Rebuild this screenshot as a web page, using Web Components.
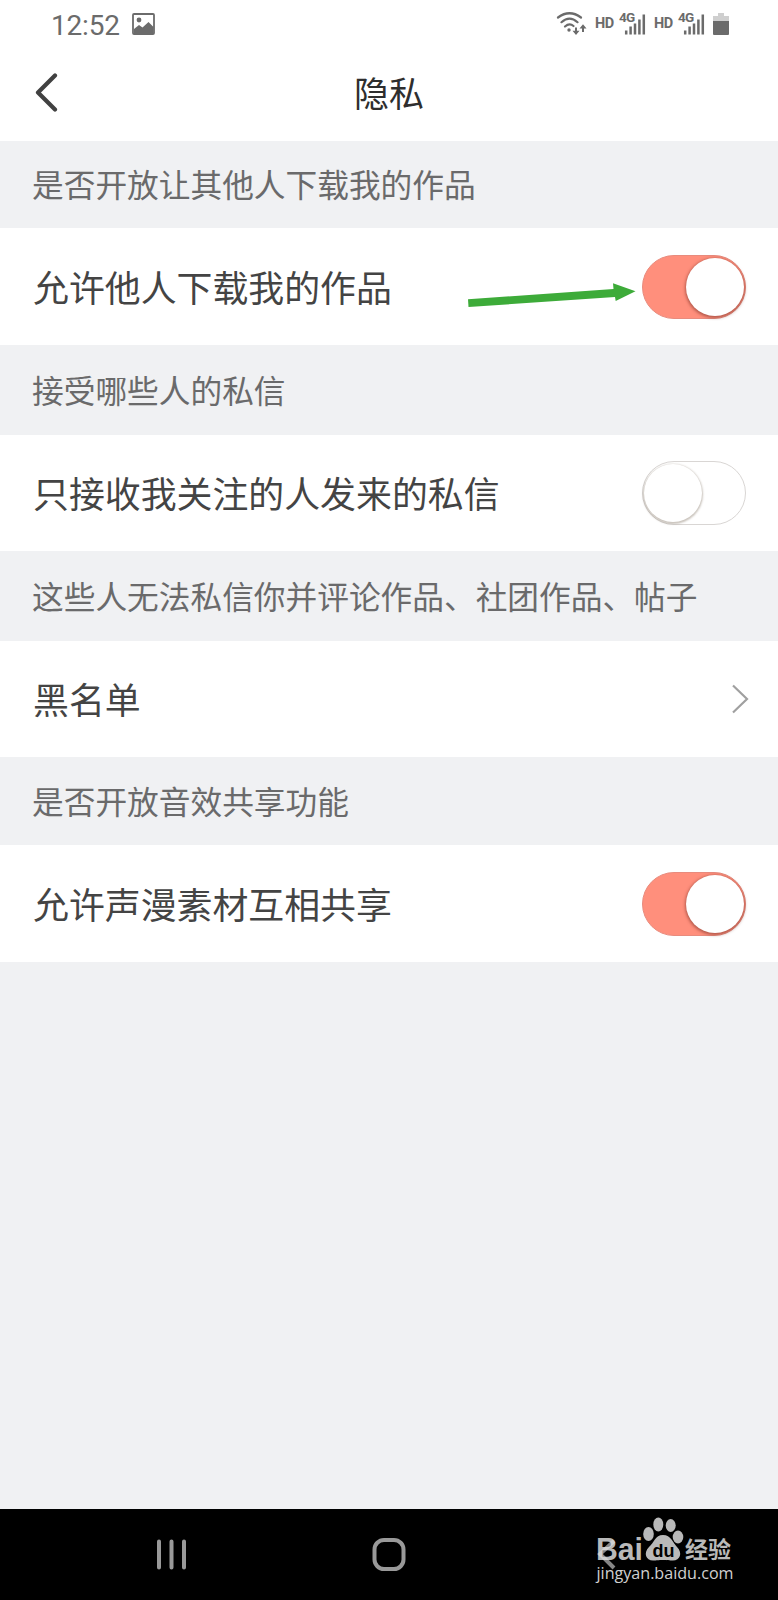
<!DOCTYPE html>
<html lang="zh-CN">
<head>
<meta charset="utf-8">
<title>隐私</title>
<style>
  body {
    margin: 0;
    background: #f0f1f3;
    font-family: "Noto Sans CJK SC", sans-serif;
  }
</style>
</head>
<body>
<privacy-screen></privacy-screen>

<script>
class StatusBar extends HTMLElement {
  connectedCallback() {
    const shadow = this.attachShadow({ mode: "open" })
    const signal = `
      <span class="signal">
        <b>4G</b>
        <svg width="22" height="22" viewBox="0 0 22 22" stroke="#6b6b6b" stroke-width="2.5">
          <path d="M2.2 21.500v-4M6.600 21.500v-8M11 21.500v-11M15.400 21.500v-15M19.800 21.500v-20"/>
        </svg>
      </span>`

    shadow.innerHTML = `
      <style>
        :host {
          display: flex;
          align-items: center;
          height: 48px;
          padding: 0 49px 0 51px;
          background: #fff;
          color: #6b6b6b;
          font-family: Roboto, sans-serif;
        }

        time {
          font-size: 28px;
          line-height: 48px;
          letter-spacing: -0.2px;
          padding-top: 3px;
        }

        svg { display: block; }
        .photo { margin-left: 12px; }
        .wifi { margin-left: auto; }

        .hd {
          width: 20px;
          margin-left: 8px;
          font: 700 14.5px/46px Roboto, sans-serif;
          letter-spacing: -0.4px;
        }

        .signal {
          position: relative;
          margin-left: 9px;
        }

        .signal b {
          position: absolute;
          left: -5px;
          top: -3px;
          font: 700 13.5px/14px Roboto, sans-serif;
          letter-spacing: -0.8px;
        }

        .battery { margin-left: 8px; }
      </style>

      <time>12:52</time>
      <svg class="photo" width="23" height="22" viewBox="0 0 23 22">
        <rect x="1" y="1" width="21" height="20" rx="1" fill="none" stroke="#6b6b6b" stroke-width="1.800"/>
        <circle cx="7" cy="7" r="2.400" fill="#6b6b6b"/>
        <path d="M2 16l5-4 3.500 2.500L16.500 9l5 5v7H2z" fill="#6b6b6b"/>
      </svg>

      <svg class="wifi" width="31" height="25" viewBox="0 0 31 25" fill="none" stroke="#6b6b6b" stroke-width="2.200" stroke-linecap="round">
        <path d="M2 5.500Q13.500-3 25 5.500M5.500 10.200Q13.500 3 21.500 10.200M9 14.500Q13.500 10.500 17.500 14"/>
        <circle cx="13" cy="18" r="1.700" fill="#6b6b6b" stroke="none"/>
        <path d="M20 15.500v6M27 20v-6" stroke-width="2" stroke-linecap="butt"/>
        <path d="M16.500 18.700h7L20 23zM23.500 16.500h7L27 12.200z" fill="#6b6b6b" stroke="none"/>
      </svg>
      <span class="hd">HD</span>
      ${signal}
      <span class="hd">HD</span>
      ${signal}
      <svg class="battery" width="16" height="24" viewBox="0 0 16 24">
        <path d="M5 1h6v3h5v6H0V4h5z" fill="#cfcfcf"/>
        <path d="M0 9h16v13q0 1-1 1H1q-1 0-1-1z" fill="#6b6b6b"/>
      </svg>
    `
  }
}

class TitleBar extends HTMLElement {
  connectedCallback() {
    const shadow = this.attachShadow({ mode: "open" })

    shadow.innerHTML = `
      <style>
        :host {
          display: grid;
          grid-template-columns: 1fr auto 1fr;
          align-items: center;
          box-sizing: border-box;
          height: 92.5px;
          padding: 0 35px 4px;
          background: #fff;
        }

        svg { display: block; }

        h1 {
          margin: 0;
          color: #2e2e2e;
          font-size: 35px;
          font-weight: 400;
          line-height: 50px;
        }
      </style>

      <svg width="24" height="40" viewBox="0 0 24 40" fill="none" stroke="#414141" stroke-width="4.200" stroke-linecap="round" stroke-linejoin="round">
        <path d="M20 3.500L3 20.500l17 17"/>
      </svg>
      <h1><slot></slot></h1>
    `
  }
}

class SectionLabel extends HTMLElement {
  connectedCallback() {
    const shadow = this.attachShadow({ mode: "open" })

    shadow.innerHTML = `
      <style>
        :host {
          display: flex;
          align-items: center;
          box-sizing: border-box;
          height: var(--height, 89.5px);
          padding: 0 32px 2px;
          background: #f0f1f3;
          color: #6a6a6b;
          font-size: 31.7px;
          line-height: 46px;
          white-space: nowrap;
        }
      </style>
      <slot></slot>
    `
  }
}

class SettingRow extends HTMLElement {
  connectedCallback() {
    const shadow = this.attachShadow({ mode: "open" })

    shadow.innerHTML = `
      <style>
        :host {
          display: flex;
          align-items: center;
          justify-content: space-between;
          position: relative;
          box-sizing: border-box;
          height: var(--height, 117px);
          padding: 0 32px 0 33px;
          background: #fff;
          color: #444;
          font-size: 35.9px;
          line-height: 52px;
          white-space: nowrap;
        }

        span { padding-bottom: 2px; }
      </style>
      <span><slot></slot></span>
      <slot name="control"></slot>
    `
  }
}

class ToggleSwitch extends HTMLElement {
  connectedCallback() {
    const shadow = this.attachShadow({ mode: "open" })

    shadow.innerHTML = `
      <style>
        :host {
          display: flex;
          box-sizing: border-box;
          width: 104px;
          height: 64px;
          padding: 2px 1px;
          border: 1px solid #d9d6d4;
          border-radius: 32px;
          background: #fff;
        }

        i {
          width: 58px;
          height: 58px;
          border-radius: 50%;
          background: #fff;
          box-shadow: 0 1px 2px 1px rgba(90, 70, 50, 0.32);
        }

        :host([checked]) {
          justify-content: flex-end;
          border-color: #e88b7d;
          background: #ff8f7c;
        }

        :host([checked]) i {
          box-shadow: 0 1px 3px 1px rgba(110, 40, 30, 0.5);
        }
      </style>
      <i></i>
    `
  }
}

class RowChevron extends HTMLElement {
  connectedCallback() {
    const shadow = this.attachShadow({ mode: "open" })

    shadow.innerHTML = `
      <style>
        :host { display: block; margin-right: -3px; }
        svg { display: block; }
      </style>
      <svg width="18" height="30" viewBox="0 0 18 30" fill="none" stroke="#a0a0a0" stroke-width="2.2">
        <path d="M2 1.500l14 13.500L2 28.500"/>
      </svg>
    `
  }
}

class HintArrow extends HTMLElement {
  connectedCallback() {
    const shadow = this.attachShadow({ mode: "open" })

    // lies over the row, pointing at its switch
    shadow.innerHTML = `
      <style>
        :host {
          position: absolute;
          left: 468px;
          top: 54px;
        }
        svg { display: block; }
      </style>
      <svg width="168" height="26" viewBox="0 0 168 26">
        <path d="M0 17.200L145.500 7 145 1.300 167.500 9.300 147.700 19 147 15 0.500 25z" fill="#3dab39"/>
      </svg>
    `
  }
}

class BaiduMark extends HTMLElement {
  connectedCallback() {
    const shadow = this.attachShadow({ mode: "open" })

    shadow.innerHTML = `
      <style>
        :host {
          display: block;
          width: 140px;
          color: #b9b9b9;
        }
        svg { display: block; overflow: visible; }
      </style>
      <svg width="140" height="68" viewBox="0 0 140 68" fill="currentColor">
        <text x="0" y="38.5" font-family="Liberation Sans, sans-serif" font-weight="700" font-size="31" textLength="47" lengthAdjust="spacingAndGlyphs">Bai</text>
        <path d="M18 20L4 33l14 14" fill="none" stroke="#e0e0e0" stroke-width="4" opacity=".6"/>
        <ellipse cx="52.500" cy="13" rx="5.300" ry="7"/>
        <ellipse cx="62.300" cy="3.500" rx="5" ry="7"/>
        <ellipse cx="74.700" cy="4.500" rx="5" ry="6.500"/>
        <ellipse cx="82" cy="16" rx="5.300" ry="6.500"/>
        <path d="M67 14c8 0 10 8 14 12 6 6 3 13.500-4 13.500-4 0-5-.5-10-.5s-6 .5-10 .5c-7 0-10-7.500-4-13.500 5-4 6-12 14-12z"/>
        <text x="56.500" y="35.500" font-family="Liberation Sans, sans-serif" font-weight="700" font-size="19" fill="#000" textLength="22" lengthAdjust="spacingAndGlyphs">du</text>
        <text x="89" y="36.500" font-family="Noto Sans CJK SC, sans-serif" font-weight="700" font-size="23" textLength="46">经验</text>
        <text x="0.500" y="57.500" font-family="Open Sans, sans-serif" font-size="16" fill="#d0d0d0" textLength="137" lengthAdjust="spacingAndGlyphs">jingyan.baidu.com</text>
      </svg>
    `
  }
}

class NavBar extends HTMLElement {
  connectedCallback() {
    const shadow = this.attachShadow({ mode: "open" })

    shadow.innerHTML = `
      <style>
        :host {
          display: grid;
          grid-template-columns: 1fr auto 1fr;
          align-items: center;
          box-sizing: border-box;
          height: 91px;
          background: #000;
        }
        svg { display: block; }
        .recents { margin-left: 156px; }
        baidu-mark { justify-self: end; margin-right: 42px; }
      </style>

      <svg class="recents" width="32" height="32" viewBox="0 0 32 32" stroke="#999" stroke-width="4" stroke-linecap="round">
        <path d="M3 2.500v26M15.500 2.500v26M28 2.500v26"/>
      </svg>
      <svg width="34" height="34" viewBox="0 0 34 34" fill="none" stroke="#999" stroke-width="4">
        <rect x="2.500" y="2" width="29" height="29" rx="9.500"/>
      </svg>
      <baidu-mark></baidu-mark>
    `
  }
}

class PrivacyScreen extends HTMLElement {
  connectedCallback() {
    const shadow = this.attachShadow({ mode: "open" })

    shadow.innerHTML = `
      <style>
        :host {
          display: flex;
          flex-direction: column;
          width: 778px;
          height: 1600px;
          overflow: hidden;
        }
        nav-bar { margin-top: auto; }
      </style>

      <status-bar></status-bar>
      <title-bar>隐私</title-bar>

      <section-label style="--height: 87.5px">是否开放让其他人下载我的作品</section-label>
      <setting-row>
        允许他人下载我的作品
        <hint-arrow slot="control"></hint-arrow>
        <toggle-switch slot="control" checked></toggle-switch>
      </setting-row>

      <section-label>接受哪些人的私信</section-label>
      <setting-row style="--height: 116.5px">
        只接收我关注的人发来的私信
        <toggle-switch slot="control"></toggle-switch>
      </setting-row>

      <section-label>这些人无法私信你并评论作品、社团作品、帖子</section-label>
      <setting-row style="--height: 116.5px">
        黑名单
        <row-chevron slot="control"></row-chevron>
      </setting-row>

      <section-label style="--height: 88px">是否开放音效共享功能</section-label>
      <setting-row>
        允许声漫素材互相共享
        <toggle-switch slot="control" checked></toggle-switch>
      </setting-row>

      <nav-bar></nav-bar>
    `
  }
}

customElements.define("status-bar", StatusBar)
customElements.define("title-bar", TitleBar)
customElements.define("section-label", SectionLabel)
customElements.define("setting-row", SettingRow)
customElements.define("toggle-switch", ToggleSwitch)
customElements.define("row-chevron", RowChevron)
customElements.define("hint-arrow", HintArrow)
customElements.define("baidu-mark", BaiduMark)
customElements.define("nav-bar", NavBar)
customElements.define("privacy-screen", PrivacyScreen)
</script>
</body>
</html>
